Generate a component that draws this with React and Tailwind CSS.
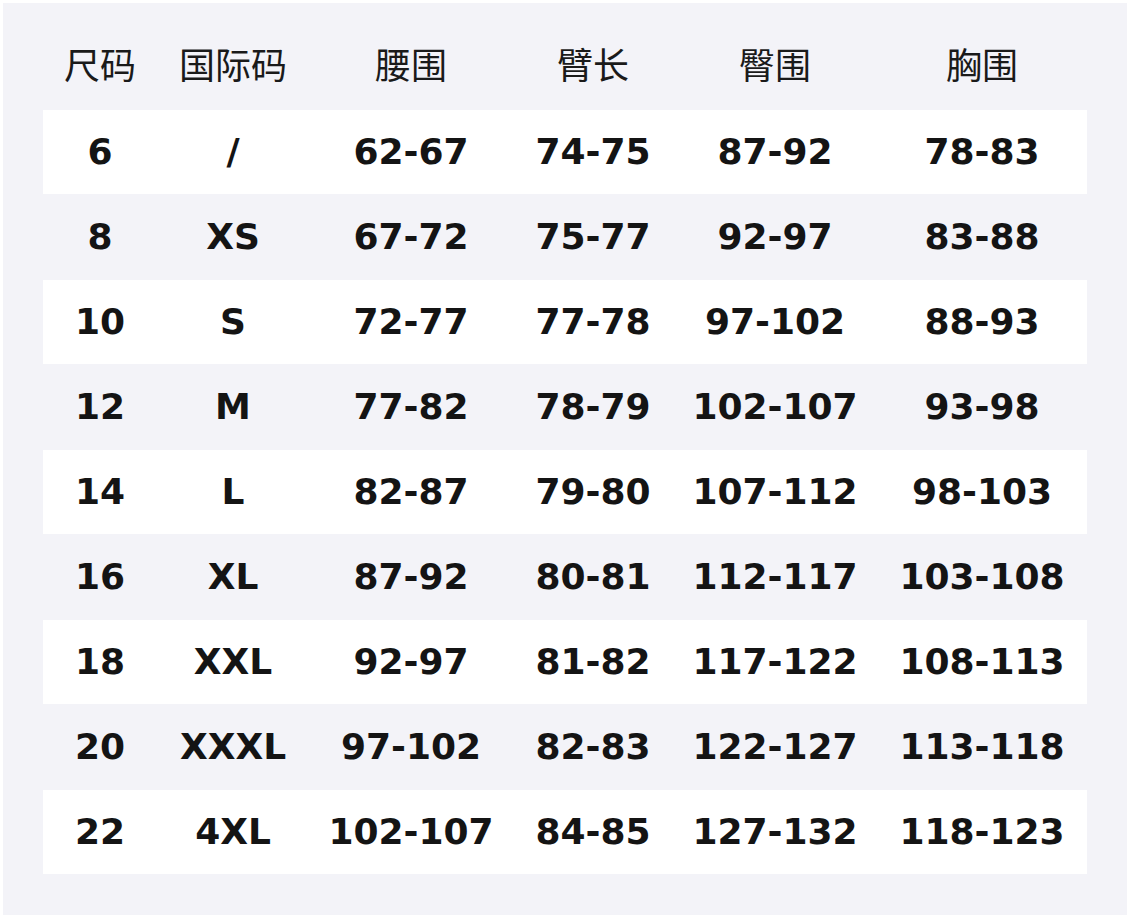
import React from "react";

const headers = ["尺码", "国际码", "腰围", "臂长", "臀围", "胸围"];
const rows = [
  ["6", "/", "62-67", "74-75", "87-92", "78-83"],
  ["8", "XS", "67-72", "75-77", "92-97", "83-88"],
  ["10", "S", "72-77", "77-78", "97-102", "88-93"],
  ["12", "M", "77-82", "78-79", "102-107", "93-98"],
  ["14", "L", "82-87", "79-80", "107-112", "98-103"],
  ["16", "XL", "87-92", "80-81", "112-117", "103-108"],
  ["18", "XXL", "92-97", "81-82", "117-122", "108-113"],
  ["20", "XXXL", "97-102", "82-83", "122-127", "113-118"],
  ["22", "4XL", "102-107", "84-85", "127-132", "118-123"],
];
const widths = ["w-[114px]", "w-[152px]", "w-[204px]", "w-[160px]", "w-[204px]", "w-[210px]"];

export default function App() {
  return (
    <div className="w-[1130px] h-[918px] bg-white p-[3px]">
      <div className="w-full h-full bg-[#f3f3f8] px-[40px] pt-[21px]">
        <div className="flex h-[86px] items-center">
          {headers.map((h, i) => (
            <div
              key={i}
              className={`${widths[i]} text-center text-[36px] text-[#1a1a1a] leading-none pb-[8px]`}
              style={{ fontFamily: '"Noto Sans CJK SC", "Noto Sans", sans-serif' }}
            >
              {h}
            </div>
          ))}
        </div>
        {rows.map((r, ri) => (
          <div
            key={ri}
            className={`flex items-center ${ri % 2 === 0 ? "bg-white h-[84px]" : "bg-[#f3f3f8] h-[86px]"}`}
          >
            {r.map((c, ci) => (
              <div
                key={ci}
                className={`${widths[ci]} text-center text-[36px] font-bold text-[#141414] leading-none`}
                style={{ fontFamily: '"DejaVu Sans", sans-serif' }}
              >
                {c}
              </div>
            ))}
          </div>
        ))}
      </div>
    </div>
  );
}
